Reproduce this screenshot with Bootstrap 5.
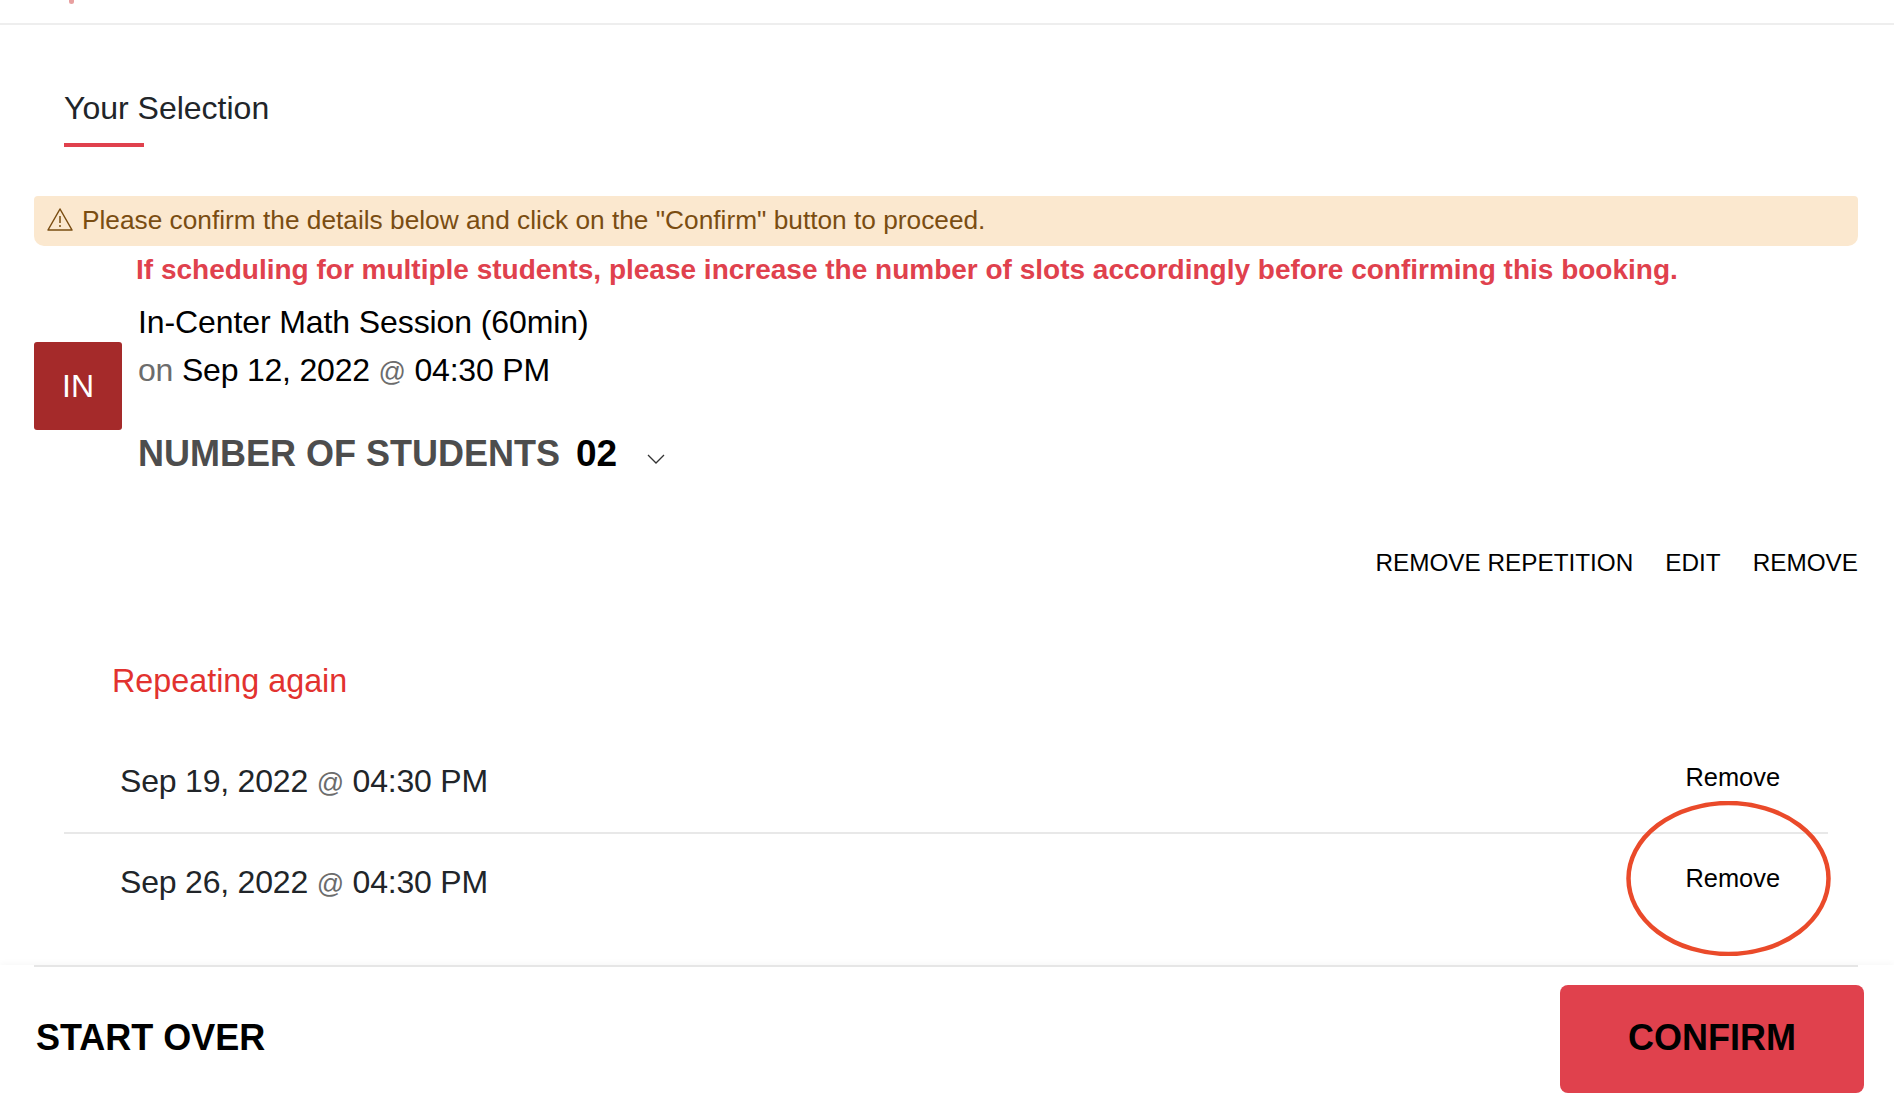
<!DOCTYPE html>
<html lang="en">
<head>
    <meta charset="UTF-8">
    <meta name="viewport" content="width=device-width, initial-scale=1.0">
    <title>Your Selection</title>
    <link href="https://cdn.jsdelivr.net/npm/bootstrap@5.3.0/dist/css/bootstrap.min.css" rel="stylesheet">
    <style>
        body {
            font-family: "Liberation Sans", Arial, sans-serif;
            background: #fff;
            color: #000;
            height: 1106px;
            overflow: hidden;
        }
        .top-strip { height: 25px; border-bottom: 2px solid #eee; padding-left: 69px; }
        .top-mark { width: 5px; height: 4px; background: #e8a0a0; border-radius: 0 0 3px 3px; }
        .page-body { padding: 0 36px 0 34px; height: 940px; }
        .tab-title {
            display: inline-block;
            margin: 60px 0 0 30px;
            font-size: 32px;
            line-height: 46px;
            color: #212529;
            font-weight: 300;
        }
        .tab-rule { width: 80px; height: 4px; background: #e0414d; margin: 12px 0 49px 30px; }
        .notice-bar {
            height: 50px;
            margin: 0;
            padding: 0 13px;
            border: 0;
            border-radius: 4px 4px 10px 10px;
            background: #fbe8cf;
            color: #7a4d12;
            font-size: 26.27px;
            gap: 9px;
        }
        .notice-bar svg { margin-top: -4px; }
        .multi-warn { margin: 6px 0 0 102px; font-size: 28px; line-height: 36px; font-weight: 700; color: #e0414d; }
        .avatar-box {
            width: 88px;
            height: 88px;
            margin-top: 54px;
            background: #a52a2a;
            color: #fff;
            font-size: 32px;
            border-radius: 3px;
        }
        .booking-info { margin-left: 16px; }
        .booking-title { font-size: 32px; line-height: 48px; margin-top: 10px; letter-spacing: -.1px; }
        .booking-date { font-size: 32px; line-height: 48px; letter-spacing: -.2px; }
        .muted-word { color: #6c6c6c; }
        .at-sign { font-size: 27px; color: #6c6c6c; }
        .students-line { margin-top: 34px; font-size: 36px; line-height: 48px; font-weight: 700; color: #4d4d4d; }
        .students-count { color: #000; margin-left: 6px; font-size: 37px; }
        .students-line svg { margin-left: 20px; vertical-align: 2px; }
        .action-links { gap: 32px; margin-top: 67px; font-size: 24.3px; line-height: 36px; }
        .repeat-head { margin: 75.5px 0 0 78px; font-size: 32.3px; line-height: 48px; color: #e2322f; }
        .repeat-list { margin: 29.5px 30px 0 30px; }
        .repeat-row {
            height: 100px;
            padding: 0 48px 5px 56px;
            border-radius: 0;
            border: 0;
            border-bottom: 2px solid #e8e8e8;
            font-size: 32px;
            letter-spacing: -.2px;
            color: #212529;
        }
        .repeat-row:last-child { border-bottom: 0; }
        .repeat-row a { font-size: 25.4px; letter-spacing: 0; color: #000; text-decoration: none; margin-top: -7px; }
        .circle-note { position: absolute; left: 1562px; top: -33px; }
        .foot-bar {
            height: 141px;
            padding: 20px 30px 0 36px;
            position: relative;
            box-shadow: 0 -3px 5px rgba(0, 0, 0, .025);
        }
        .foot-bar::before {
            content: "";
            position: absolute;
            left: 34px;
            right: 36px;
            top: 0;
            height: 2px;
            background: #e6e6e6;
        }
        .start-over { font-size: 36px; font-weight: 700; color: #000; text-decoration: none; margin-top: 26px; }
        .confirm-btn {
            width: 304px;
            height: 108px;
            padding-bottom: 8px;
            background: #e0414d;
            border: 0;
            border-radius: 8px;
            color: #000;
            font-size: 36px;
            font-weight: 700;
        }
    </style>
</head>
<body>

    <div class="top-strip"><div class="top-mark"></div></div>

    <div class="page-body">
        <div class="tab-title">Your Selection</div>
        <div class="tab-rule"></div>

        <div class="alert notice-bar d-flex align-items-center" role="alert">
            <svg width="26" height="24" viewBox="0 0 26 24" fill="none" stroke="#7a4d12" stroke-width="1.5">
                <path d="M13 2 L25 23 H1 Z" stroke-linejoin="round"/>
                <path d="M13 9 V16 M13 18 V20"/>
            </svg>
            <span>Please confirm the details below and click on the "Confirm" button to proceed.</span>
        </div>
        <div class="multi-warn">If scheduling for multiple students, please increase the number of slots accordingly before confirming this booking.</div>

        <div class="d-flex">
            <div class="avatar-box d-flex align-items-center justify-content-center flex-shrink-0">IN</div>
            <div class="booking-info">
                <div class="booking-title">In-Center Math Session (60min)</div>
                <div class="booking-date"><span class="muted-word">on</span> Sep 12, 2022 <span class="at-sign">@</span> 04:30 PM</div>
                <div class="students-line">NUMBER OF STUDENTS <span class="students-count">02</span>
                    <svg width="18" height="10" viewBox="0 0 18 10" fill="none" stroke="#333" stroke-width="1.3"><path d="M1 1 L9 9 L17 1"/></svg>
                </div>
            </div>
        </div>

        <div class="action-links d-flex justify-content-end">
            <span>REMOVE REPETITION</span>
            <span>EDIT</span>
            <span>REMOVE</span>
        </div>

        <div class="repeat-head">Repeating again</div>

        <div class="list-group repeat-list">
            <div class="list-group-item repeat-row d-flex justify-content-between align-items-center">
                <span>Sep 19, 2022 <span class="at-sign">@</span> 04:30 PM</span>
                <a href="#">Remove</a>
            </div>
            <div class="list-group-item repeat-row d-flex justify-content-between align-items-center position-relative">
                <span>Sep 26, 2022 <span class="at-sign">@</span> 04:30 PM</span>
                <a href="#">Remove</a>
                <svg class="circle-note" width="205" height="155" viewBox="0 0 205 155" fill="none">
                    <ellipse cx="102.5" cy="77.5" rx="100" ry="75.5" stroke="#ea4a2a" stroke-width="4.5"/>
                </svg>
            </div>
        </div>
    </div>

    <div class="foot-bar d-flex justify-content-between align-items-start">
        <a class="start-over" href="#">START OVER</a>
        <button class="btn confirm-btn" type="button">CONFIRM</button>
    </div>

    <script src="https://cdn.jsdelivr.net/npm/bootstrap@5.3.0/dist/js/bootstrap.bundle.min.js"></script>

</body>
</html>
